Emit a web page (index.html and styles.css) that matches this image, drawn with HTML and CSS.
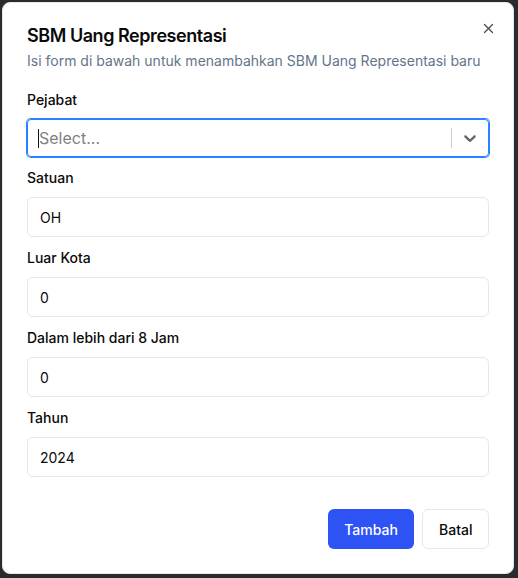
FILE: index.html
```html
<!DOCTYPE html>
<html lang="id">
<head>
<meta charset="utf-8">
<title>SBM Uang Representasi</title>
<link rel="stylesheet" href="styles.css">
</head>
<body>
<div class="overlay">
  <div class="dialog" role="dialog">
    <button class="close" aria-label="Close">
      <svg width="15" height="15" viewBox="0 0 15 15" fill="none"><path d="M3.5 3.5l8 8M11.5 3.5l-8 8" stroke="#4b4b55" stroke-width="1.3" stroke-linecap="round"/></svg>
    </button>
    <div class="header">
      <h2 class="title">SBM Uang Representasi</h2>
      <p class="desc">Isi form di bawah untuk menambahkan SBM Uang Representasi baru</p>
    </div>
    <form class="form">
      <div class="field">
        <label class="label">Pejabat</label>
        <div class="select">
          <div class="select-value"><span class="caret"></span><span class="placeholder">Select...</span></div>
          <span class="sep"></span>
          <span class="indicator">
            <svg width="20" height="20" viewBox="0 0 20 20"><path fill="#666" d="M4.516 7.548c0.436-0.446 1.043-0.481 1.576 0l3.908 3.747 3.908-3.747c0.533-0.481 1.141-0.446 1.574 0 0.436 0.445 0.408 1.197 0 1.615-0.406 0.418-4.695 4.502-4.695 4.502-0.217 0.223-0.502 0.335-0.787 0.335s-0.57-0.112-0.789-0.335c0 0-4.287-4.084-4.695-4.502s-0.436-1.170 0-1.615z"/></svg>
          </span>
        </div>
      </div>
      <div class="field">
        <label class="label">Satuan</label>
        <div class="input">OH</div>
      </div>
      <div class="field">
        <label class="label">Luar Kota</label>
        <div class="input">0</div>
      </div>
      <div class="field">
        <label class="label">Dalam lebih dari 8 Jam</label>
        <div class="input">0</div>
      </div>
      <div class="field">
        <label class="label">Tahun</label>
        <div class="input">2024</div>
      </div>
      <div class="footer">
        <button type="button" class="btn btn-primary">Tambah</button>
        <button type="button" class="btn btn-outline">Batal</button>
      </div>
    </form>
  </div>
</div>
</body>
</html>
```

FILE: styles.css
```css
* { box-sizing: border-box; }
html, body { margin: 0; padding: 0; }
body {
  width: 518px;
  height: 578px;
  background: #2b2b2b;
  font-family: Inter, "Noto Sans", sans-serif;
  color: #0f172a;
  overflow: hidden;
}
.overlay {
  padding: 2px 4px 4px 2px;
  height: 578px;
}
.dialog {
  position: relative;
  background: #fff;
  border: 1px solid #e2e8f0;
  border-radius: 8px;
  width: 512px;
  height: 572px;
  padding: 24px;
  display: flex;
  flex-direction: column;
}
.close {
  position: absolute;
  top: 17px;
  right: 17px;
  width: 16px;
  height: 16px;
  padding: 0;
  border: 0;
  background: none;
  display: flex;
  align-items: center;
  justify-content: center;
}
.header { display: flex; flex-direction: column; gap: 6px; }
.title {
  margin: 0;
  font-size: 18px;
  line-height: 18px;
  font-weight: 600;
  letter-spacing: -0.45px;
  color: #0a0a0a;
}
.desc {
  margin: 0;
  font-size: 14px;
  line-height: 20px;
  color: #64748b;
}
.form {
  margin-top: 19px;
  display: flex;
  flex-direction: column;
  gap: 11px;
  flex: 1;
}
.field { display: flex; flex-direction: column; }
.label {
  font-size: 14px;
  line-height: 20px;
  font-weight: 500;
  color: #0a0a0a;
  margin-bottom: 9px;
}
.field:first-child .label { margin-bottom: 9px; }
.select {
  height: 38px;
  border: 1px solid #2684ff;
  box-shadow: 0 0 0 1px #2684ff;
  border-radius: 4px;
  display: flex;
  align-items: center;
}
.select-value {
  flex: 1;
  display: flex;
  align-items: center;
  padding: 0 8px 0 10px;
  font-size: 16px;
  color: #808080;
}
.caret {
  width: 1px;
  height: 19px;
  background: #111;
}
.sep {
  width: 1px;
  height: 20px;
  background: #cccccc;
}
.indicator {
  width: 36px;
  height: 36px;
  display: flex;
  align-items: center;
  justify-content: center;
}
.input {
  height: 40px;
  border: 1px solid #e2e8f0;
  border-radius: 6px;
  padding: 0 12px;
  display: flex;
  align-items: center;
  font-size: 14px;
  color: #0a0a0a;
}
.footer {
  margin-top: auto;
  display: flex;
  justify-content: flex-end;
  gap: 8px;
}
.btn {
  height: 40px;
  border-radius: 6px;
  font-family: inherit;
  font-size: 14px;
  font-weight: 500;
  padding: 0 16px;
}
.btn-primary {
  background: #2e53f4;
  color: #fff;
  border: 0;
  width: 86px;
}
.btn-outline {
  background: #fff;
  color: #0a0a0a;
  border: 1px solid #e2e8f0;
  width: 67px;
}
```
